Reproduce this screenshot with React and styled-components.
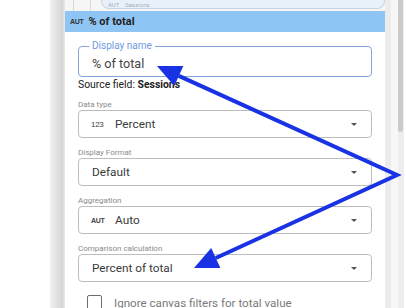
import React from "react";
import styled, { createGlobalStyle } from "styled-components";

const Global = createGlobalStyle`
  html, body { margin: 0; padding: 0; background: #fff; }
  body { font-family: Roboto, "Noto Sans", Arial, sans-serif; }
`;

const Page = styled.div`
  position: relative;
  width: 406px;
  height: 308px;
  overflow: hidden;
  display: flex;
  background: #fff;
`;

const Gutter = styled.div`
  width: 50px;
  flex: none;
`;

const ShadowStrip = styled.div`
  width: 15px;
  flex: none;
  background: linear-gradient(90deg, #f1f1f1 0%, #e2e2e2 45%, #d6d6d6 85%, #ececec 100%);
`;

const Column = styled.div`
  width: 320px;
  flex: none;
  display: flex;
  flex-direction: column;
  min-height: 0;
`;

const TopStrip = styled.div`
  flex: none;
  height: 11px;
  display: flex;
  background: #f6f6f6;
`;

const TopLine = styled.div`
  width: ${(p) => p.$w}px;
  border-right: 1px solid #d8d8d8;
  flex: none;
`;

const Pill = styled.div`
  flex: 1;
  margin-left: 10px;
  height: 9px;
  background: #e8f1fa;
  border: 1px solid #c9d3dd;
  border-top: none;
  border-radius: 0 0 8px 8px;
  display: flex;
  align-items: center;
  padding: 0 0 0 6px;
  box-sizing: border-box;
  font-size: 6px;
  line-height: 7px;
  color: #a3aeb9;
  gap: 6px;
`;

const Header = styled.div`
  flex: none;
  height: 21px;
  background: #8fc5f4;
  display: flex;
  align-items: center;
  padding-left: 5px;
  gap: 5px;
`;

const Tag = styled.span`
  font-family: "Liberation Sans", Arial, sans-serif;
  font-size: ${(p) => p.$size || 7}px;
  font-weight: ${(p) => p.$weight || 700};
  color: ${(p) => p.$color || "#333"};
  letter-spacing: -0.3px;
`;

const HeaderTitle = styled.span`
  font-size: 11px;
  font-weight: 700;
  color: #1f1f1f;
`;

const Body = styled.div`
  flex: 1;
  min-height: 0;
  background: #fff;
  padding: 14px 13px 0 13px;
  display: flex;
  flex-direction: column;
`;

const NameField = styled.div`
  flex: none;
  position: relative;
  height: 31px;
  box-sizing: border-box;
  border: 1.5px solid #7fa5d8;
  border-radius: 4px;
  display: flex;
  align-items: center;
  padding: 4px 0 0 13px;
  font-size: 12.6px;
  color: #444;
`;

const FloatLabel = styled.span`
  position: absolute;
  top: -7px;
  left: 10px;
  padding: 0 3px;
  background: #fff;
  font-size: 10px;
  line-height: 12px;
  color: #6f9ae0;
`;

const SourceRow = styled.div`
  flex: none;
  margin-top: 1px;
  height: 14px;
  line-height: 14px;
  font-size: 10.4px;
  color: #222;
  margin-bottom: 8px;
  b { font-weight: 700; }
`;

const Group = styled.div`
  flex: none;
  display: flex;
  flex-direction: column;
  margin-bottom: 10px;
`;

const SmallLabel = styled.div`
  height: 10px;
  line-height: 10px;
  font-size: 8px;
  color: #8a8a8a;
`;

const Select = styled.div`
  height: 28px;
  box-sizing: border-box;
  border: 1.3px solid #bdbdbd;
  border-radius: 4px;
  display: flex;
  align-items: center;
  padding: 0 12px 0 ${(p) => (p.$icon ? 12 : 13)}px;
  font-size: 11.8px;
  color: #3a3a3a;
`;

const IconSlot = styled.span`
  width: 24px;
  flex: none;
  display: flex;
  align-items: center;
`;

const Value = styled.span`
  flex: 1;
`;

const Caret = styled.span`
  width: 0;
  height: 0;
  border-left: 3px solid transparent;
  border-right: 3px solid transparent;
  border-top: 3px solid #555;
  margin-right: 2px;
`;

const CheckRow = styled.div`
  flex: none;
  display: flex;
  align-items: center;
  gap: 12px;
  padding-left: 9px;
  margin-top: 3px;
  font-size: 11.6px;
  color: #7a7a7a;
`;

const Box = styled.span`
  width: 13px;
  height: 13px;
  border: 1.5px solid #6e6e6e;
  border-radius: 2px;
  flex: none;
`;

const ScrollTrack = styled.div`
  width: 19px;
  flex: none;
  display: flex;
  background: linear-gradient(90deg, #ececec 0 6px, #f7f7f7 6px 13px, #eeeeee 13px);
`;

const Thumb = styled.div`
  margin-left: 13px;
  width: 5px;
  height: 132px;
  background: #cbcbcb;
  border-radius: 0 0 3px 3px;
`;

const Overlay = styled.svg`
  position: absolute;
  left: 0;
  top: 0;
  pointer-events: none;
`;

const SelectField = ({ label, icon, value }) => (
  <Group>
    <SmallLabel>{label}</SmallLabel>
    <Select $icon={!!icon}>
      {icon && <IconSlot>{icon}</IconSlot>}
      <Value>{value}</Value>
      <Caret />
    </Select>
  </Group>
);

export default function App() {
  return (
    <>
      <Global />
      <Page>
        <Gutter />
        <ShadowStrip />
        <Column>
          <TopStrip>
            <TopLine $w={8} />
            <TopLine $w={16} />
            <Pill>
              <span>AUT</span>
              <span>Sessions</span>
            </Pill>
          </TopStrip>
          <Header>
            <Tag>AUT</Tag>
            <HeaderTitle>% of total</HeaderTitle>
          </Header>
          <Body>
            <NameField>
              <FloatLabel>Display name</FloatLabel>
              % of total
            </NameField>
            <SourceRow>
              Source field: <b>Sessions</b>
            </SourceRow>
            <SelectField
              label="Data type"
              icon={<Tag $size={8} $weight={400} $color="#444">123</Tag>}
              value="Percent"
            />
            <SelectField label="Display Format" value="Default" />
            <SelectField label="Aggregation" icon={<Tag $color="#444">AUT</Tag>} value="Auto" />
            <SelectField label="Comparison calculation" value="Percent of total" />
            <CheckRow>
              <Box />
              <span>Ignore canvas filters for total value</span>
            </CheckRow>
          </Body>
        </Column>
        <ScrollTrack>
          <Thumb />
        </ScrollTrack>
        <Overlay width="406" height="308" viewBox="0 0 406 308">
          <polyline
            points="178.8,75.9 397,175 215.8,258"
            fill="none"
            stroke="#1832e4"
            strokeWidth="4"
            strokeLinejoin="miter"
          />
          <polygon points="157,66 183.3,65.9 174.3,85.9" fill="#1832e4" />
          <polygon points="194,268 220.4,268 211.2,248" fill="#1832e4" />
        </Overlay>
      </Page>
    </>
  );
}
